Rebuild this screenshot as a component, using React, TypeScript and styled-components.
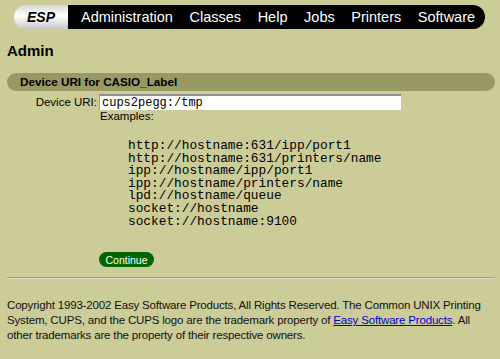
import styled, { createGlobalStyle } from "styled-components";

const GlobalStyle = createGlobalStyle`
  html, body {
    margin: 0;
    background: #cccc99;
  }
  body {
    font-family: "Liberation Sans", Arial, sans-serif;
    color: #000;
  }
`;

const Page = styled.div`
  padding: 5px 5px 0 7px;
`;

const NavBar = styled.nav`
  display: flex;
  height: 24px;
  margin-left: 7px;
  width: 471px;
`;

const Logo = styled.div`
  width: 54px;
  border-radius: 12px 0 0 12px;
  background: linear-gradient(to bottom, #d8d8d8 0%, #ffffff 45%, #c8c8c8 100%);
  display: flex;
  align-items: center;
  justify-content: center;
  font-weight: bold;
  font-style: italic;
  font-size: 14px;
  color: #000;
`;

const Menu = styled.div`
  flex: 1;
  background: #000;
  border-radius: 0 12px 12px 0;
  display: flex;
  align-items: center;
  gap: 16.6px;
  padding: 0 0 0 13px;
`;

const MenuLink = styled.a`
  color: #fff;
  font-size: 14.5px;
  text-decoration: none;
`;

const Title = styled.h1`
  font-size: 15px;
  line-height: 18px;
  margin: 13px 0 13px;
`;

const SectionBar = styled.h2`
  margin: 0;
  height: 18px;
  line-height: 18px;
  border-radius: 9px;
  background: #999966;
  padding-left: 13px;
  font-size: 11.7px;
  font-weight: bold;
`;

const Row = styled.div`
  display: flex;
  align-items: center;
  margin-top: 3px;
  height: 16px;
`;

const Label = styled.label`
  width: 90px;
  text-align: right;
  padding-right: 2px;
  font-size: 11.5px;
`;

const UriInput = styled.input`
  box-sizing: border-box;
  width: 302px;
  height: 16px;
  margin: 0;
  padding: 0 2px;
  border: none;
  border-top: 2px solid #909090;
  border-left: 1px solid #a0a0a0;
  background: #fff;
  font-family: "Liberation Mono", "Courier New", monospace;
  font-size: 12px;
  outline: none;
`;

const Note = styled.div`
  margin-left: 93px;
  font-size: 11.5px;
  line-height: 13px;
`;

const Examples = styled.pre`
  margin: 17px 0 0 121px;
  font-family: "Liberation Mono", "Courier New", monospace;
  font-size: 12.8px;
  line-height: 12.6px;
`;

const Continue = styled.button`
  margin: 24px 0 0 92px;
  width: 55px;
  height: 15px;
  padding: 0;
  border: none;
  border-radius: 8px;
  background: #006600;
  color: #fff;
  font-family: "Liberation Sans", Arial, sans-serif;
  font-size: 10.5px;
  display: block;
`;

const Rule = styled.hr`
  margin: 10px 0 0;
  height: 0;
  border: none;
  border-top: 1px solid #999;
  border-bottom: 1px solid #dcdcc0;
`;

const Footer = styled.p`
  margin: 19px 0 0;
  font-size: 11.5px;
  letter-spacing: -0.17px;
  line-height: 15px;
  color: #111;
`;

const FooterLink = styled.a`
  color: #0000cc;
`;

const examples = [
  "http://hostname:631/ipp/port1",
  "http://hostname:631/printers/name",
  "ipp://hostname/ipp/port1",
  "ipp://hostname/printers/name",
  "lpd://hostname/queue",
  "socket://hostname",
  "socket://hostname:9100",
];

const menu = ["Administration", "Classes", "Help", "Jobs", "Printers", "Software"];

export default function App() {
  return (
    <>
      <GlobalStyle />
      <Page>
        <NavBar>
          <Logo>ESP</Logo>
          <Menu>
            {menu.map((m) => (
              <MenuLink key={m} href="#">
                {m}
              </MenuLink>
            ))}
          </Menu>
        </NavBar>
        <Title>Admin</Title>
        <SectionBar>Device URI for CASIO_Label</SectionBar>
        <Row>
          <Label htmlFor="uri">Device URI:</Label>
          <UriInput id="uri" defaultValue="cups2pegg:/tmp" />
        </Row>
        <Note>Examples:</Note>
        <Examples>{examples.join("\n")}</Examples>
        <Continue>Continue</Continue>
        <Rule />
        <Footer>
          Copyright 1993-2002 Easy Software Products, All Rights Reserved. The
          Common UNIX Printing System, CUPS, and the CUPS logo are the trademark
          property of <FooterLink href="#">Easy Software Products</FooterLink>.
          All other trademarks are the property of their respective owners.
        </Footer>
      </Page>
    </>
  );
}
